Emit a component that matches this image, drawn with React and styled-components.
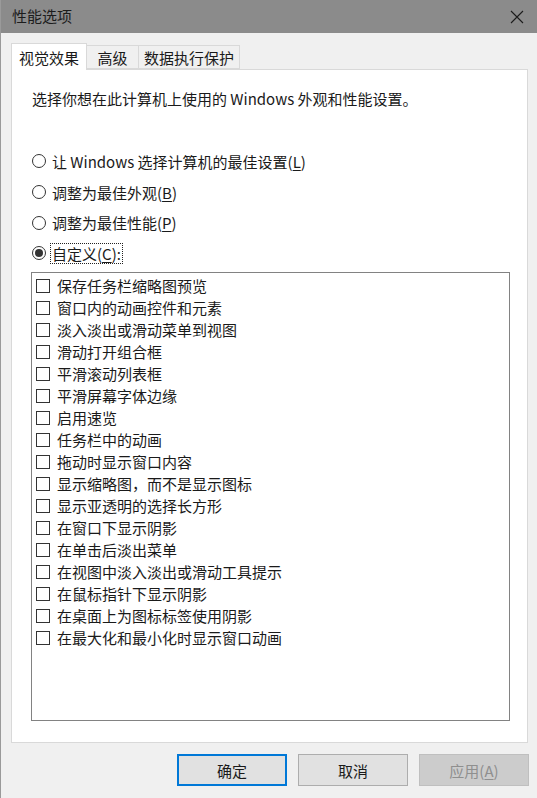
import React from "react";
import styled, { createGlobalStyle } from "styled-components";

const Global = createGlobalStyle`
  html, body { margin: 0; padding: 0; background: #f0f0f0; }
  * { box-sizing: border-box; }
  body { font-family: "Noto Sans CJK SC", "Microsoft YaHei", sans-serif; color: #1a1a1a; }
`;

const Window = styled.div`
  width: 537px;
  height: 798px;
  background: #f0f0f0;
  display: flex;
  flex-direction: column;
  overflow: hidden;
  border-left: 1px solid #9a9a9a;
`;

const TitleBar = styled.div`
  height: 33px;
  flex: none;
  background: #8b8b8b;
  display: flex;
  align-items: center;
  justify-content: space-between;
  padding: 0 12px 2px 11px;
  font-size: 15px;
  color: #1c1c1c;
`;

const CloseBtn = styled.div`
  width: 14px;
  height: 14px;
  display: flex;
  margin-right: 1px;
  margin-top: 2px;
`;

const Body = styled.div`
  display: flex;
  flex-direction: column;
  padding: 10px 8px 0 10px;
`;

const TabStrip = styled.div`
  display: flex;
  align-items: flex-end;
  height: 26px;
  position: relative;
  z-index: 1;
`;

const Tab = styled.div`
  width: ${(p) => p.$w}px;
  height: ${(p) => (p.$active ? 27 : 24)}px;
  margin-bottom: ${(p) => (p.$active ? -1 : 0)}px;
  display: flex;
  align-items: center;
  justify-content: center;
  font-size: 15px;
  background: ${(p) => (p.$active ? "#ffffff" : "#f0f0f0")};
  border: 1px solid #d9d9d9;
  border-bottom: ${(p) => (p.$active ? "none" : "1px solid #d9d9d9")};
  margin-left: ${(p) => (p.$first ? 0 : -1)}px;
`;

const Panel = styled.div`
  height: 674px;
  width: 517px;
  background: #ffffff;
  border: 1px solid #d9d9d9;
  display: flex;
  flex-direction: column;
  padding: 19px 16px 0 20px;
`;

const Desc = styled.div`
  font-size: 15px;
  line-height: 20px;
`;

const RadioGroup = styled.div`
  display: flex;
  flex-direction: column;
  margin-top: 37px;
`;

const RadioRow = styled.div`
  display: flex;
  align-items: center;
  height: 30.7px;
  font-size: 15px;
`;

const RadioCircle = styled.span`
  width: 14px;
  height: 14px;
  border-radius: 50%;
  border: 1px solid #333;
  background: #fff;
  display: flex;
  align-items: center;
  justify-content: center;
  margin-right: 4px;
  flex: none;
  &::after {
    content: "";
    width: 8px;
    height: 8px;
    border-radius: 50%;
    background: ${(p) => (p.$checked ? "#333" : "transparent")};
  }
`;

const RadioLabel = styled.span`
  padding: 0 1px;
  line-height: 19px;
  border: 1px dotted ${(p) => (p.$focus ? "#222" : "transparent")};
`;

const U = styled.span`
  text-decoration: underline;
  text-underline-offset: 2px;
`;

const ListBox = styled.div`
  margin: 3px 0 0 -1px;
  width: 479px;
  height: 449px;
  border: 1px solid #828282;
  background: #fff;
  padding: 2px 0 0 4px;
  display: flex;
  flex-direction: column;
`;

const CheckRow = styled.div`
  display: flex;
  align-items: center;
  height: 22px;
  font-size: 15px;
`;

const Box = styled.span`
  width: 14px;
  height: 14px;
  border: 1px solid #333;
  background: #fff;
  margin-right: 7px;
  flex: none;
`;

const ButtonRow = styled.div`
  display: flex;
  justify-content: flex-end;
  gap: 11px;
  padding: 11px 0 0 0;
`;

const Button = styled.div`
  width: 110px;
  height: 32px;
  display: flex;
  align-items: center;
  justify-content: center;
  font-size: 15px;
  background: ${(p) => (p.$disabled ? "#cccccc" : "#e1e1e1")};
  color: ${(p) => (p.$disabled ? "#8f8f8f" : "#1a1a1a")};
  border: ${(p) =>
    p.$default ? "2px solid #0078d7" : p.$disabled ? "1px solid #bfbfbf" : "1px solid #adadad"};
`;

const items = [
  "保存任务栏缩略图预览",
  "窗口内的动画控件和元素",
  "淡入淡出或滑动菜单到视图",
  "滑动打开组合框",
  "平滑滚动列表框",
  "平滑屏幕字体边缘",
  "启用速览",
  "任务栏中的动画",
  "拖动时显示窗口内容",
  "显示缩略图，而不是显示图标",
  "显示亚透明的选择长方形",
  "在窗口下显示阴影",
  "在单击后淡出菜单",
  "在视图中淡入淡出或滑动工具提示",
  "在鼠标指针下显示阴影",
  "在桌面上为图标标签使用阴影",
  "在最大化和最小化时显示窗口动画",
];

export default function App() {
  return (
    <>
      <Global />
      <Window>
        <TitleBar>
          <span>性能选项</span>
          <CloseBtn>
            <svg width="14" height="14" viewBox="0 0 14 14">
              <path d="M1 1 L13 13 M13 1 L1 13" stroke="#1c1c1c" strokeWidth="1.1" fill="none" />
            </svg>
          </CloseBtn>
        </TitleBar>
        <Body>
          <TabStrip>
            <Tab $active $first $w={76}>视觉效果</Tab>
            <Tab $w={53}>高级</Tab>
            <Tab $w={102}>数据执行保护</Tab>
          </TabStrip>
          <Panel>
            <Desc>选择你想在此计算机上使用的 Windows 外观和性能设置。</Desc>
            <RadioGroup>
              <RadioRow>
                <RadioCircle />
                <RadioLabel>
                  让 Windows 选择计算机的最佳设置(<U>L</U>)
                </RadioLabel>
              </RadioRow>
              <RadioRow>
                <RadioCircle />
                <RadioLabel>
                  调整为最佳外观(<U>B</U>)
                </RadioLabel>
              </RadioRow>
              <RadioRow>
                <RadioCircle />
                <RadioLabel>
                  调整为最佳性能(<U>P</U>)
                </RadioLabel>
              </RadioRow>
              <RadioRow>
                <RadioCircle $checked />
                <RadioLabel $focus>
                  自定义(<U>C</U>):
                </RadioLabel>
              </RadioRow>
            </RadioGroup>
            <ListBox>
              {items.map((t) => (
                <CheckRow key={t}>
                  <Box />
                  <span>{t}</span>
                </CheckRow>
              ))}
            </ListBox>
          </Panel>
          <ButtonRow>
            <Button $default>确定</Button>
            <Button>取消</Button>
            <Button $disabled>
              应用(<U>A</U>)
            </Button>
          </ButtonRow>
        </Body>
      </Window>
    </>
  );
}
